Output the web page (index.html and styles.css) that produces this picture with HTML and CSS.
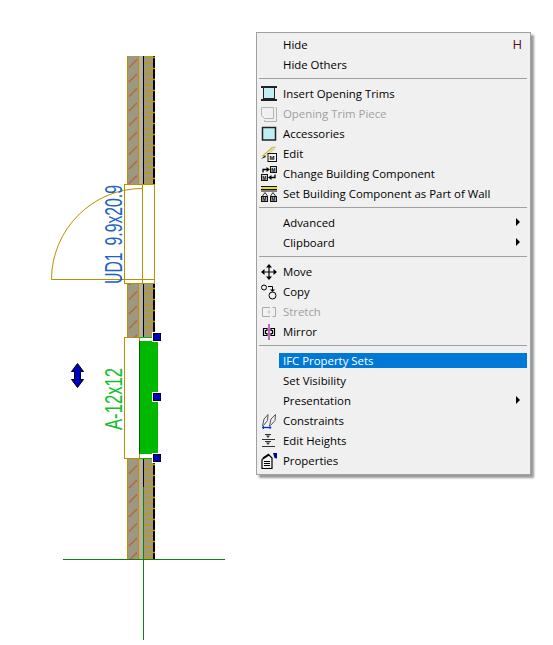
FILE: index.html
```html
<!DOCTYPE html>
<html lang="en">
<head>
  <meta charset="UTF-8">
  <meta name="viewport" content="width=device-width, initial-scale=1.0">
  <title>Wall context menu</title>
  <link rel="stylesheet" href="styles.css">
</head>
<body>
  <div class="canvas">
    <!-- plan view of the wall -->
    <svg class="plan" width="553" height="645" viewBox="0 0 553 645">
      <defs>
        <pattern id="hatch" x="127" y="56" width="12" height="14.5" patternUnits="userSpaceOnUse">
          <path d="M2 11.500L10 3.500" stroke="#c4501a" stroke-width="1.300" stroke-dasharray="1.800 0.500" fill="none"/>
        </pattern>
        <pattern id="insul" x="144" y="56" width="11" height="11" patternUnits="userSpaceOnUse">
          <path d="M2 1.500H11M0 7.500H2L3 6.500H9" stroke="#c09a00" stroke-width="1.500" fill="none"/>
        </pattern>
      </defs>

      <g>
        <rect x="127" y="56" width="12" height="129" fill="#9d9883"/>
        <rect x="127" y="56" width="12" height="129" fill="url(#hatch)"/>
        <rect x="127" y="283" width="12" height="55" fill="#9d9883"/>
        <rect x="127" y="283" width="12" height="55" fill="url(#hatch)"/>
        <rect x="127" y="458" width="12" height="101" fill="#9d9883"/>
        <rect x="127" y="458" width="12" height="101" fill="url(#hatch)"/>

        <rect x="139" y="56" width="4" height="129" fill="#b4b2a2"/>
        <rect x="139" y="283" width="4" height="55" fill="#b4b2a2"/>
        <rect x="139" y="458" width="4" height="101" fill="#b4b2a2"/>

        <rect x="143" y="56" width="12" height="129" fill="#000"/>
        <rect x="143" y="283" width="12" height="55" fill="#000"/>
        <rect x="143" y="458" width="12" height="101" fill="#000"/>
        <rect x="144" y="56" width="9" height="129" fill="#9d9883"/>
        <rect x="144" y="283" width="9" height="55" fill="#9d9883"/>
        <rect x="144" y="458" width="9" height="101" fill="#9d9883"/>
        <rect x="144" y="56" width="11" height="129" fill="url(#insul)"/>
        <rect x="144" y="283" width="11" height="55" fill="url(#insul)"/>
        <rect x="144" y="458" width="11" height="101" fill="url(#insul)"/>

        <path d="M127.500 56V185M138.500 56V185M127.500 283V338M138.500 283V338M127.500 458V559M138.500 458V559" stroke="#c09000" fill="none"/>
      </g>

      <!-- door -->
      <rect x="124.500" y="184.500" width="30" height="99" fill="#fff" stroke="#b89000"/>
      <path d="M142.500 184V283" stroke="#b89000" fill="none"/>
      <path d="M155 279.500H51.500C51.500 230 92 188.500 142 188.500" stroke="#b89000" fill="none"/>
      <text class="tag tag-door" transform="translate(121.500 284) rotate(-90)" textLength="99" lengthAdjust="spacingAndGlyphs">UD1 9.9x20.9</text>

      <!-- window -->
      <rect x="139" y="338" width="15" height="120" fill="#fff"/>
      <rect x="124.500" y="337.500" width="15" height="121" fill="#fff" stroke="#b89000"/>
      <rect x="139" y="341" width="19" height="113" fill="#00b800"/>
      <path d="M139.500 341V454" stroke="#006000" fill="none"/>
      <path d="M139.500 337.500H153M139.500 458.500H153" stroke="#00b800" fill="none"/>
      <text class="tag tag-window" transform="translate(121.500 430) rotate(-90)" textLength="62" lengthAdjust="spacingAndGlyphs">A-12x12</text>

      <!-- flip arrow -->
      <path d="M77.500 363.500L83.500 371.500H80.500V379.500H83.500L77.500 387.500L71.500 379.500H74.500V371.500H71.500Z" fill="#0000c0" stroke="#000"/>

      <!-- handles -->
      <g class="handles">
        <rect x="152" y="332" width="10" height="10" fill="#fff"/>
        <rect x="152" y="392" width="10" height="10" fill="#fff"/>
        <rect x="152" y="453" width="10" height="10" fill="#fff"/>
        <rect x="153.500" y="333.500" width="7" height="7" fill="#0000c0" stroke="#000"/>
        <rect x="153.500" y="393.500" width="7" height="7" fill="#0000c0" stroke="#000"/>
        <rect x="153.500" y="454.500" width="7" height="7" fill="#0000c0" stroke="#000"/>
      </g>

      <!-- axis lines -->
      <path d="M63 559.500H225M143.500 487V640" stroke="#108010" fill="none"/>
    </svg>

    <div class="menu">
      <div class="menu-row"><span class="icon"></span><span class="label">Hide</span><span class="key">H</span></div>
      <div class="menu-row"><span class="icon"></span><span class="label">Hide Others</span></div>
      <div class="menu-sep"></div>

      <div class="menu-row">
        <svg class="icon" viewBox="0 0 16 16"><rect x="3" y="2" width="10" height="10" fill="#bfeef5"/><path d="M0 1H16M0 14H16" stroke="#222" stroke-width="2" fill="none"/><path d="M2.500 2V13M13.500 2V13M3 12.500H13" stroke="#222" fill="none"/></svg>
        <span class="label">Insert Opening Trims</span>
      </div>
      <div class="menu-row disabled">
        <svg class="icon" viewBox="0 0 16 16"><path d="M0.500 1.500H12.500V12.500H3.500L0.500 9.500ZM14.500 1.500H15.500V15.500H3.500V14" fill="none" stroke="#b4b4b4"/></svg>
        <span class="label">Opening Trim Piece</span>
      </div>
      <div class="menu-row">
        <svg class="icon" viewBox="0 0 16 16"><rect x="1.500" y="1.500" width="13" height="12.500" fill="#bfeef5" stroke="#222" stroke-width="1.500"/></svg>
        <span class="label">Accessories</span>
      </div>
      <div class="menu-row">
        <svg class="icon" viewBox="0 0 16 16"><path d="M0.500 10L11 1L15 0.500L12.500 4L3 11Z" fill="#c4bc50"/><path d="M4 9L13 2" stroke="#fffbe0" fill="none"/><path d="M0 13L4 9.500L5 11L2.500 12Z" fill="#222"/><rect x="7" y="7.500" width="8.500" height="8" fill="#f4f4f4" stroke="#111"/><text class="icon-m" x="8.600" y="14">M</text></svg>
        <span class="label">Edit</span>
      </div>
      <div class="menu-row">
        <svg class="icon" viewBox="0 0 16 16"><rect x="9.500" y="0.500" width="6" height="6" fill="#ddd" stroke="#111"/><rect x="0.500" y="8.500" width="6" height="6" fill="#ddd" stroke="#111"/><text class="icon-m icon-m-small" x="10.300" y="5.500">M</text><text class="icon-m icon-m-small" x="1.300" y="13.500">M</text><path d="M2 6.500V3.500H7" stroke="#000" stroke-width="1.300" fill="none"/><path d="M5.500 1L9 3.500L5.500 6Z" fill="#000"/><path d="M14 8.500V11.500H9" stroke="#000" stroke-width="1.300" fill="none"/><path d="M10.500 9L7 11.500L10.500 14Z" fill="#000"/></svg>
        <span class="label">Change Building Component</span>
      </div>
      <div class="menu-row">
        <svg class="icon" viewBox="0 0 16 16"><path d="M0 0.500H16M0 3.500H16" stroke="#111" fill="none"/><path d="M0 2H16" stroke="#e8e020" stroke-width="2" fill="none"/><path d="M0 5H16" stroke="#111" fill="none"/><path d="M4 6.500L1.500 10M4 6.500L6.500 10M12 6.500L9.500 10M12 6.500L14.500 10" stroke="#333" fill="none"/><rect x="0.500" y="10.500" width="6" height="5" fill="#ddd" stroke="#111"/><rect x="9.500" y="10.500" width="6" height="5" fill="#ddd" stroke="#111"/><text class="icon-m icon-m-small" x="1.300" y="15">M</text><text class="icon-m icon-m-small" x="10.300" y="15">M</text></svg>
        <span class="label">Set Building Component as Part of Wall</span>
      </div>
      <div class="menu-sep"></div>

      <div class="menu-row"><span class="icon"></span><span class="label">Advanced</span><span class="arrow"></span></div>
      <div class="menu-row"><span class="icon"></span><span class="label">Clipboard</span><span class="arrow"></span></div>
      <div class="menu-sep"></div>

      <div class="menu-row">
        <svg class="icon" viewBox="0 0 16 16"><path d="M8 2V14M2 8H14" stroke="#000" stroke-width="1.200" fill="none"/><path d="M8 0L11 3.500H5ZM8 16L11 12.500H5ZM0 8L3.500 5V11ZM16 8L12.500 5V11Z" fill="#000"/></svg>
        <span class="label">Move</span>
      </div>
      <div class="menu-row">
        <svg class="icon" viewBox="0 0 16 16"><circle cx="3" cy="3.500" r="2.500" fill="none" stroke="#000"/><circle cx="11.500" cy="11.500" r="3.500" fill="none" stroke="#000"/><path d="M7 2.500H11.500V6.500" stroke="#000" fill="none"/><path d="M9 5.500L11.500 8L14 5.500Z" fill="#000"/></svg>
        <span class="label">Copy</span>
      </div>
      <div class="menu-row disabled">
        <svg class="icon" viewBox="0 0 16 16"><path d="M9 3.500H1.500V12.500H9M11.500 3.500H14.500V12.500H11.500" fill="none" stroke="#a8a8a8"/><path d="M8 6.500V9.500" stroke="#a8a8a8" fill="none"/></svg>
        <span class="label">Stretch</span>
      </div>
      <div class="menu-row">
        <svg class="icon" viewBox="0 0 16 16"><path d="M6 4.500H2.500V11.500H6V9.500H4.500V6.500H6ZM10 4.500H13.500V11.500H10V9.500H11.500V6.500H10Z" fill="none" stroke="#000" stroke-width="1.200"/><path d="M8 0V16" stroke="#a000a0" stroke-width="1.200" fill="none"/></svg>
        <span class="label">Mirror</span>
      </div>
      <div class="menu-sep"></div>

      <div class="menu-row"><span class="icon"></span><span class="label active">IFC Property Sets</span></div>
      <div class="menu-row"><span class="icon"></span><span class="label">Set Visibility</span></div>
      <div class="menu-row"><span class="icon"></span><span class="label">Presentation</span><span class="arrow"></span></div>
      <div class="menu-row">
        <svg class="icon" viewBox="0 0 16 16"><path d="M1.500 13L3 6L7 1.500L6.500 7.500L2.500 12.500M8.500 13L10 6L14.500 1.500L14 7.500L9.500 12.500" fill="none" stroke="#555"/><path d="M1 14.500H10" stroke="#0030e0" stroke-width="1.300" fill="none"/><path d="M1 14.500L3 12.500V16.500ZM10.500 14.500L8.500 12.500V16.500Z" fill="#0030e0"/></svg>
        <span class="label">Constraints</span>
      </div>
      <div class="menu-row">
        <svg class="icon" viewBox="0 0 16 16"><path d="M1 6.500H14M1 13.500H14M4 1.500H10M4 8.500H10" stroke="#333" fill="none"/><path d="M5 2.500H9L7 5ZM5 9.500H9L7 12Z" fill="#333"/></svg>
        <span class="label">Edit Heights</span>
      </div>
      <div class="menu-row">
        <svg class="icon" viewBox="0 0 16 16"><path d="M1 6.500L8 2L11 5V15.500H1Z" fill="#f4f4f4" stroke="#000" stroke-width="1.200"/><path d="M3 8.500H9M3 10.500H9M3 12.500H9" stroke="#000" fill="none"/><path d="M2 5L8 1" stroke="#000" stroke-width="1.500" fill="none"/><path d="M12 0H16V5.500L13.500 5Z" fill="#000090"/></svg>
        <span class="label">Properties</span>
      </div>
    </div>
  </div>
</body>
</html>
```

FILE: styles.css
```css
* {
  margin: 0;
  padding: 0;
  box-sizing: border-box;
}

body {
  background: #ffffff;
  font-family: "Open Sans", Arial, sans-serif;
}

.canvas {
  position: relative;
  width: 553px;
  height: 645px;
  overflow: hidden;
}

.plan {
  display: block;
}

.tag {
  font-family: "Liberation Sans", Arial, sans-serif;
  font-size: 24px;
  word-spacing: 4px;
}

.tag-door {
  fill: #1a62c4;
}

.tag-window {
  fill: #12c02a;
}

.menu {
  position: absolute;
  left: 256px;
  top: 32px;
  width: 275px;
  height: 443px;
  padding: 2px 0 3px 0;
  background: #f0f0f0;
  border: 1px solid #a0a0a0;
  box-shadow: 3px 3px 2px rgba(0, 0, 0, 0.4);
  font-size: 11.4px;
  color: #000;
}

.menu-row {
  display: flex;
  align-items: flex-start;
  height: 20px;
  padding: 2px 8px 0 4px;
}

.menu-row .icon {
  flex: none;
  display: block;
  width: 16px;
  height: 16px;
  margin-right: 6px;
}

.menu-row .label {
  flex: 1;
  height: 15px;
  line-height: 16px;
  white-space: nowrap;
}

.menu-row .label.active {
  margin-left: -4px;
  margin-right: -5px;
  padding-left: 4px;
  background: #0078d7;
  color: #fff;
}

.menu-row.disabled {
  color: #a0a0a0;
}

.menu-row .key {
  margin-top: -2px;
  font-size: 13px;
  line-height: 18px;
  color: #5a0a2a;
}

.menu-row .arrow {
  width: 0;
  height: 0;
  margin-top: 3px;
  margin-right: 2px;
  border-left: 4px solid #000;
  border-top: 4px solid transparent;
  border-bottom: 4px solid transparent;
}

.menu-sep {
  height: 1px;
  margin: 3px 3px 5px 2px;
  background: #a0a0a0;
}

.icon-m {
  font-family: "Liberation Sans", Arial, sans-serif;
  font-size: 6px;
  font-weight: bold;
  fill: #000;
}

.icon-m-small {
  font-size: 5px;
}
```
